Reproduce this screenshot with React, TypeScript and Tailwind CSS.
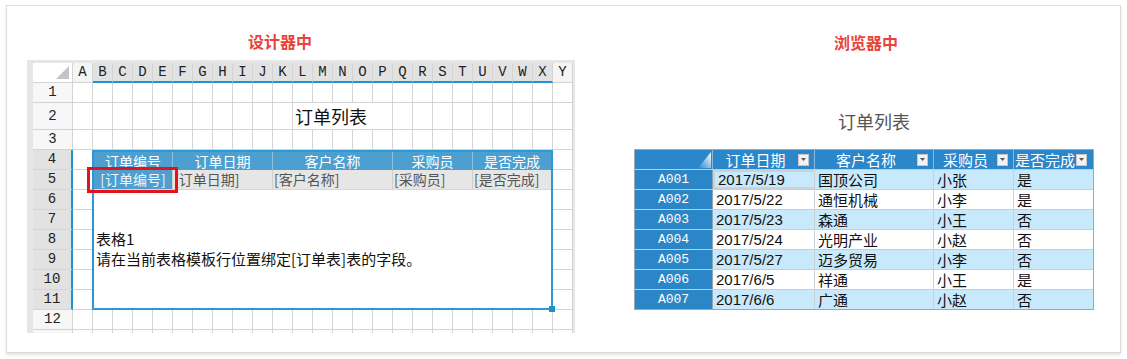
import React from 'react';

const COLS = 'ABCDEFGHIJKLMNOPQRSTUVWXY'.split('');
const LINE = 'border-[#d4d4d4]';

function Cell({ className = '' }: { className?: string }) {
  return <div className={`w-[20px] h-full shrink-0 border-r border-b ${LINE} ${className}`} />;
}

function RowHead({ n, active = false, h = 'h-[20px]' }: { n: number | string; active?: boolean; h?: string }) {
  return (
    <div
      className={`w-[40px] ${h} shrink-0 flex items-center justify-center border-b ${LINE} text-[14px] text-[#222] font-['Liberation_Mono',monospace] ${
        active ? 'bg-[#e2e2e2] border-r-2 border-r-[#1f93d1]' : 'bg-[#f7f7f7] border-r'
      }`}
    >
      {n}
    </div>
  );
}

const designHeads = [
  { t: '订单编号', w: 'w-[79px]' },
  { t: '订单日期', w: 'w-[100px]' },
  { t: '客户名称', w: 'w-[120px]' },
  { t: '采购员', w: 'w-[80px]' },
  { t: '是否完成', w: 'w-[78px]' },
];

function Designer() {
  return (
    <div className="w-[548px] h-[273px] bg-[#e6e6e6] pt-[3px] pl-[6px] pr-[2px] overflow-hidden">
      <div className="bg-white">
        {/* column letters */}
        <div className="flex h-[20px]">
          <div className={`relative w-[40px] h-full border-r border-b ${LINE} bg-white`}>
            <svg className="absolute right-[3px] bottom-[3px]" width="13" height="13" viewBox="0 0 13 13">
              <polygon points="13,0 13,13 0,13" fill="#c4c4c4" />
            </svg>
          </div>
          {COLS.map((c) => {
            const on = c !== 'A' && c !== 'Y';
            return (
              <div
                key={c}
                className={`w-[20px] h-full shrink-0 flex items-center justify-center border-r ${LINE} text-[14px] text-[#222] font-['Liberation_Mono',monospace] ${
                  on ? 'bg-[#e2e2e2] border-b-2 border-b-[#1f93d1]' : 'bg-[#f5f5f5] border-b'
                }`}
              >
                {c}
              </div>
            );
          })}
        </div>

        {/* row 1 */}
        <div className="flex h-[20px]">
          <RowHead n={1} />
          {COLS.map((c) => <Cell key={c} />)}
        </div>

        {/* row 2 with title */}
        <div className="flex h-[27px]">
          <RowHead n={2} h="h-[27px]" />
          {COLS.slice(0, 11).map((c) => <Cell key={c} />)}
          <div className={`w-[100px] h-full shrink-0 border-r border-b ${LINE} flex items-center pl-[2px] text-[18px] leading-[26px] text-[#111] font-['Noto_Sans_CJK_SC',sans-serif] whitespace-nowrap`}>
            订单列表
          </div>
          {COLS.slice(16).map((c) => <Cell key={c} />)}
        </div>

        {/* row 3 */}
        <div className="flex h-[20px]">
          <RowHead n={3} />
          {COLS.map((c) => <Cell key={c} />)}
        </div>

        {/* rows 4-11 with table */}
        <div className="flex h-[160px]">
          <div className="flex flex-col">
            {[4, 5, 6, 7, 8, 9, 10, 11].map((n) => <RowHead key={n} n={n} active />)}
          </div>
          <div className="flex flex-col">
            {[4, 5, 6, 7, 8, 9, 10, 11].map((n) => (
              <div key={n} className={`w-[20px] h-[20px] border-r border-b ${LINE}`} />
            ))}
          </div>
          <div className="relative -ml-px w-[461px] h-[160px] shrink-0 border-2 border-[#2a9ad4] flex flex-col bg-white font-['Noto_Sans_CJK_SC',sans-serif]">
            <div className="flex h-[18px] bg-[#4d9fcf]">
              {designHeads.map((d, i) => (
                <div
                  key={d.t}
                  className={`${d.w} h-full shrink-0 flex items-center justify-center text-[14px] leading-[17px] text-white whitespace-nowrap ${
                    i < 4 ? 'border-r border-[#8cc2e2]' : ''
                  }`}
                >
                  {d.t}
                </div>
              ))}
            </div>
            <div className="flex h-[20px] bg-[#e6e6e6] border-b border-[#d6d6d6]">
              {designHeads.map((d, i) => (
                <div
                  key={d.t}
                  className={`${d.w} h-full shrink-0 flex items-center text-[14px] leading-[19px] whitespace-nowrap ${
                    i === 0 ? 'bg-[#4d9fcf] text-[#eef6fb] justify-center' : 'text-[#555] pl-[1px]'
                  } ${i < 4 ? 'border-r border-[#cfcfcf]' : ''}`}
                >
                  [{d.t}]
                </div>
              ))}
            </div>
            <div className="pt-[39px] pl-[2px] text-[15px] text-[#111] leading-[20px] whitespace-nowrap">
              <div>表格1</div>
              <div>请在当前表格模板行位置绑定[订单表]表的字段。</div>
            </div>
            {/* selection box */}
            <div className="absolute left-[-7px] top-[15px] w-[91px] h-[26px] border-[3px] border-[#e2141b]" />
            {/* resize handle */}
            <div className="absolute right-[-4px] bottom-[-4px] w-[6px] h-[6px] bg-[#1e90d0]" />
          </div>
          <div className="flex flex-col">
            {[4, 5, 6, 7, 8, 9, 10, 11].map((n) => (
              <div key={n} className={`w-[20px] h-[20px] border-r border-b ${LINE}`} />
            ))}
          </div>
        </div>

        {/* row 12 */}
        <div className="flex h-[20px]">
          <RowHead n={12} />
          {COLS.map((c) => <Cell key={c} />)}
        </div>
        <div className="flex h-[3px] overflow-hidden">
          <div className={`w-[40px] h-[20px] shrink-0 border-r ${LINE} bg-[#f7f7f7]`} />
          {COLS.map((c) => (
            <div key={c} className={`w-[20px] h-[20px] shrink-0 border-r ${LINE}`} />
          ))}
        </div>
      </div>
    </div>
  );
}

const rows = [
  ['A001', '2017/5/19', '国顶公司', '小张', '是'],
  ['A002', '2017/5/22', '通恒机械', '小李', '是'],
  ['A003', '2017/5/23', '森通', '小王', '否'],
  ['A004', '2017/5/24', '光明产业', '小赵', '否'],
  ['A005', '2017/5/27', '迈多贸易', '小李', '否'],
  ['A006', '2017/6/5', '祥通', '小王', '是'],
  ['A007', '2017/6/6', '广通', '小赵', '否'],
];

const viewCols = [
  { t: '订单日期', w: 'w-[102px]' },
  { t: '客户名称', w: 'w-[119px]' },
  { t: '采购员', w: 'w-[80px]' },
  { t: '是否完成', w: 'w-[78px]' },
];

function DropBtn() {
  return (
    <div className="w-[11px] h-[12px] shrink-0 bg-[#f3f3f3] border border-[#c8c8c8] flex items-center justify-center">
      <svg width="5" height="3" viewBox="0 0 5 3">
        <polygon points="0,0 5,0 2.5,3" fill="#555" />
      </svg>
    </div>
  );
}

function Viewer() {
  return (
    <div className="w-[460px] border border-[#9aa8b2] font-['Noto_Sans_CJK_SC',sans-serif]">
      <div className="flex h-[19px] bg-[#2c87ca]">
        <div className="relative w-[78px] h-full shrink-0 border-r border-[#8fb8d8]">
          <svg className="absolute right-[1px] bottom-[1px]" width="13" height="16" viewBox="0 0 13 16">
            <defs>
              <linearGradient id="tri" x1="0" y1="1" x2="1" y2="0">
                <stop offset="0" stopColor="#2c87ca" />
                <stop offset="1" stopColor="#ffffff" />
              </linearGradient>
            </defs>
            <polygon points="13,0 13,16 0,16" fill="url(#tri)" />
          </svg>
        </div>
        {viewCols.map((c, i) => (
          <div
            key={c.t}
            className={`${c.w} h-full shrink-0 flex items-center pr-[5px] ${i < 3 ? 'border-r border-[#8fb8d8]' : 'pr-[3px]'}`}
          >
            <div className="flex-1 text-center text-[15px] leading-[19px] text-white whitespace-nowrap">{c.t}</div>
            <DropBtn />
          </div>
        ))}
      </div>
      {rows.map((r, ri) => (
        <div key={r[0]} className={`flex h-[20px] border-t border-[#c3ced6] ${ri % 2 === 0 ? 'bg-[#c8e9fb]' : 'bg-white'}`}>
          <div className="w-[78px] h-full shrink-0 bg-[#2b86c8] border-r border-[#8aa4b8] flex items-center justify-center text-[13px] text-white font-['Liberation_Mono',monospace]">
            {r[0]}
          </div>
          {r.slice(1).map((v, ci) => (
            <div
              key={ci}
              className={`${viewCols[ci].w} h-full shrink-0 flex items-center pl-[3px] text-[15px] leading-[19px] text-[#111] whitespace-nowrap ${
                ci < 3 ? 'border-r border-[#c8d2d8]' : ''
              } ${ci === 0 ? "font-['Liberation_Sans',sans-serif]" : ''} ${
                ri === 0 && ci === 0 ? 'border-2 border-[#22704c] pl-[2px]' : ''
              }`}
            >
              {v}
            </div>
          ))}
        </div>
      ))}
    </div>
  );
}

export default function App() {
  return (
    <div className="w-[1127px] h-[359px] bg-white pt-[5px] pl-[6px]">
      <div className="w-[1115px] h-[348px] bg-white border border-[#dcdcdc] shadow-[0_2px_3px_rgba(0,0,0,0.12)] flex">
        {/* designer side */}
        <div className="ml-[20px] flex flex-col">
          <div className="ml-[221px] mt-[25px] h-[20px] flex items-center text-[16px] font-bold text-[#e8433c] font-['Noto_Sans_CJK_SC',sans-serif]">
            设计器中
          </div>
          <div className="mt-[9px]">
            <Designer />
          </div>
        </div>

        {/* browser side */}
        <div className="ml-[59px] flex flex-col">
          <div className="mt-[26px] h-[20px] flex items-center justify-center pl-[4px] text-[16px] font-bold text-[#e8433c] font-['Noto_Sans_CJK_SC',sans-serif]">
            浏览器中
          </div>
          <div className="mt-[57px] h-[24px] flex items-center justify-center pl-[20px] text-[18px] text-[#555] font-['Noto_Sans_CJK_SC',sans-serif]">
            订单列表
          </div>
          <div className="mt-[16px]">
            <Viewer />
          </div>
        </div>
      </div>
    </div>
  );
}
